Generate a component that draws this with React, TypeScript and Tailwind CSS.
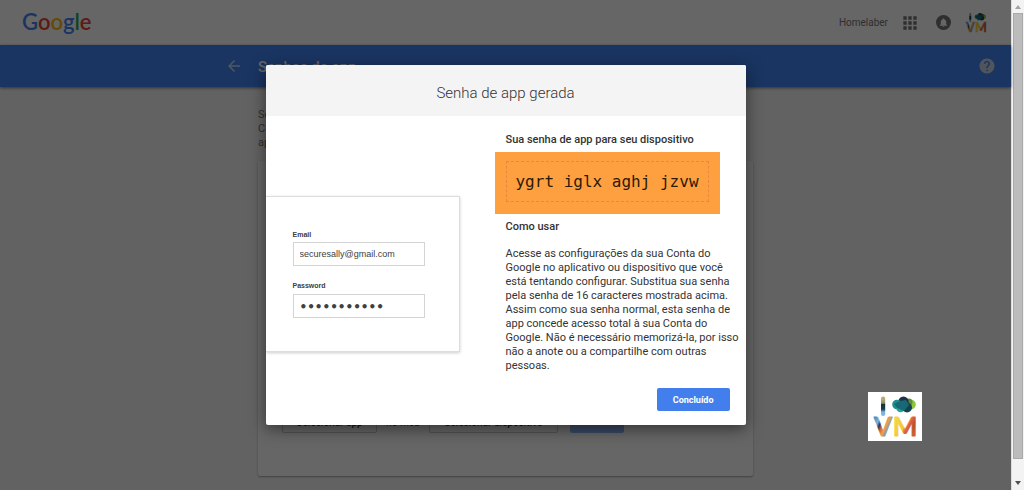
import React from "react";
import { MdArrowBack, MdHelp, MdApps, MdNotifications } from "react-icons/md";

function GoogleLogo() {
  return (
    <a
      href="#google"
      aria-label="Google"
      className="pb-[2px] font-[Lato,sans-serif] text-[22px] leading-7 font-semibold"
    >
      <span className="text-[#4285f4]">G</span>
      <span className="text-[#ea4335]">o</span>
      <span className="text-[#fbbc05]">o</span>
      <span className="text-[#4285f4]">g</span>
      <span className="text-[#34a853]">l</span>
      <span className="text-[#ea4335]">e</span>
    </a>
  );
}

function VmLogo({ id, className }: { id: string; className: string }) {
  const v = `${id}-v`;
  const m = `${id}-m`;
  const i = `${id}-i`;
  return (
    <svg viewBox="0 0 54 49" className={className} aria-hidden="true">
      <defs>
        <linearGradient id={i} x1="0" y1="0" x2="0" y2="1">
          <stop offset="0.15" stopColor="#b9a777" />
          <stop offset="0.35" stopColor="#8a8a5c" />
          <stop offset="0.4" stopColor="#17323c" />
          <stop offset="0.65" stopColor="#1c3b50" />
          <stop offset="0.8" stopColor="#7db7e0" />
        </linearGradient>
        <linearGradient id={v} x1="0" y1="0.2" x2="0.8" y2="0.8">
          <stop offset="0.05" stopColor="#3b86bd" />
          <stop offset="0.3" stopColor="#7fb2d8" />
          <stop offset="0.42" stopColor="#27394a" />
          <stop offset="0.55" stopColor="#d9673c" />
          <stop offset="0.7" stopColor="#e9a254" />
          <stop offset="0.9" stopColor="#4a90c0" />
        </linearGradient>
        <linearGradient id={m} x1="0" y1="0.2" x2="1" y2="0.9">
          <stop offset="0.1" stopColor="#f5d54a" />
          <stop offset="0.45" stopColor="#f0c93a" />
          <stop offset="0.55" stopColor="#e5643f" />
          <stop offset="0.7" stopColor="#b8502a" />
          <stop offset="1" stopColor="#ee6a32" />
        </linearGradient>
      </defs>
      <rect x="13" y="4.500" width="4.200" height="19.500" rx="2.100" fill={`url(#${i})`} />
      <circle cx="43" cy="12.500" r="4.800" fill="#8cc63f" />
      <circle cx="41" cy="10" r="3.500" fill="#5c8f3a" />
      <circle cx="35.500" cy="9.800" r="5.200" fill="#23304a" />
      <circle cx="29" cy="12.500" r="4.800" fill="#1f8f8d" />
      <circle cx="32.500" cy="16" r="4.300" fill="#27a29b" />
      <circle cx="39" cy="15.500" r="5" fill="#14414f" />
      <path d="M26 12 L32 9 L38 8 L41 13 L36 19 L29 16 Z" fill="#176a75" />
      <text
        x="15"
        y="44"
        textAnchor="middle"
        fontFamily="Lato, sans-serif"
        fontSize="26"
        fontWeight="700"
        fill={`url(#${v})`}
        stroke={`url(#${v})`}
        strokeWidth="0.8"
        strokeLinejoin="round"
      >
        V
      </text>
      <text
        x="37"
        y="44"
        textAnchor="middle"
        fontFamily="Lato, sans-serif"
        fontSize="26"
        fontWeight="700"
        fill={`url(#${m})`}
        stroke={`url(#${m})`}
        strokeWidth="0.8"
        strokeLinejoin="round"
      >
        M
      </text>
    </svg>
  );
}

function TopBar() {
  return (
    <header className="flex h-[45px] shrink-0 items-center justify-between bg-white pr-[22px] pl-[22px]">
      <GoogleLogo />
      <div className="flex items-center">
        <a href="#account" className="text-[10px] leading-4 text-[#757575]">
          Homelaber
        </a>
        <button type="button" aria-label="Apps" className="ml-3 text-[#757575]">
          <MdApps size={20} />
        </button>
        <button
          type="button"
          aria-label="Notificações"
          className="ml-4 flex size-[15px] items-center justify-center rounded-full bg-[#757575] text-white"
        >
          <MdNotifications size={11} />
        </button>
        <button type="button" aria-label="Conta" className="ml-3">
          <VmLogo id="avatar" className="h-[25px] w-[26px]" />
        </button>
      </div>
    </header>
  );
}

function TitleBar() {
  return (
    <div className="relative flex h-[42px] shrink-0 items-center bg-[#4285f4] pr-[15px] pl-[225px] text-white shadow-[0_1px_3px_rgba(0,0,0,0.5)]">
      <button type="button" aria-label="Voltar" className="text-[#c3d8fb]">
        <MdArrowBack size={18} />
      </button>
      <h1 className="ml-[15px] flex-1 pt-[2px] text-[15px] leading-5 font-medium">Senhas de app</h1>
      <button type="button" aria-label="Ajuda" className="text-[#c8d4e6]">
        <MdHelp size={18} />
      </button>
    </div>
  );
}

function PasswordPage() {
  return (
    <main className="flex flex-1 flex-col items-center bg-[#f5f5f5] pt-[21px]">
      <div className="w-[495px]">
        <p className="text-[11px] leading-[14px] text-[#757575]">
          Senhas de app permitem que você faça login na sua
          <br />
          Conta do Google em aplicativos de dispositivos sem
          <br />
          aplicar a verificação em duas etapas.
        </p>
        <section className="mt-[11px] flex h-[315px] flex-col justify-end rounded-[2px] bg-white px-6 pb-[43px] shadow-[0_1px_2px_rgba(0,0,0,0.35)]">
          <div className="flex items-center text-[11px] leading-4 text-[#333333]">
            <button
              type="button"
              className="h-6 w-[95px] rounded-[2px] border border-[#cccccc] pt-[3px] text-[10px] font-medium"
            >
              Selecionar app
            </button>
            <span className="w-[52px] pt-[3px] text-center text-[10px]">no meu</span>
            <button
              type="button"
              className="h-6 w-[129px] rounded-[2px] border border-[#cccccc] pt-[3px] text-[10px] font-medium"
            >
              Selecionar dispositivo
            </button>
            <button
              type="button"
              className="ml-3 h-6 w-[54px] rounded-[2px] bg-[#8fb5f5] text-[10px] font-medium text-white"
            >
              Gerar
            </button>
          </div>
        </section>
      </div>
    </main>
  );
}

function SignInExample() {
  return (
    <div className="flex h-[156px] w-[194px] flex-col border border-l-0 border-[#dddddd] bg-white pt-[34px] pl-[27px] font-['Liberation_Sans',Arial,sans-serif] text-[#404040] shadow-[0_1px_3px_rgba(0,0,0,0.2)]">
      <label htmlFor="email" className="text-[7px] leading-[8px] font-bold">
        Email
      </label>
      <input
        id="email"
        type="text"
        readOnly
        defaultValue="securesally@gmail.com"
        className="mt-[3px] h-6 w-[132px] border border-[#d4d4d4] px-[6px] text-[9px]"
      />
      <label htmlFor="password" className="mt-4 text-[7px] leading-[8px] font-bold">
        Password
      </label>
      <input
        id="password"
        type="password"
        readOnly
        defaultValue="securesally"
        className="mt-1 h-6 w-[132px] border border-[#d4d4d4] px-[6px] pt-[2px] font-['DejaVu_Sans',sans-serif] text-[12px] font-bold"
      />
    </div>
  );
}

function PasswordDialog() {
  return (
    <div
      role="dialog"
      aria-labelledby="dialog-title"
      className="w-[480px] overflow-hidden rounded-[2px] bg-white text-[#333333] shadow-[0_4px_16px_rgba(0,0,0,0.5)]"
    >
      <h2
        id="dialog-title"
        className="bg-[#f4f4f4] pt-[18px] pb-[13px] text-center text-[15px] leading-5 font-light text-[#333333]"
      >
        Senha de app gerada
      </h2>
      <div className="flex">
        <div className="w-[229px] pt-20">
          <SignInExample />
        </div>
        <div className="flex flex-1 flex-col pt-[17px] pr-4 pb-[14px] text-[11px] leading-[14px]">
          <h3 className="pl-[11px] font-medium">Sua senha de app para seu dispositivo</h3>
          <div className="mt-[5px] w-[225px] bg-[#ffa040] px-[11px] pt-[9px] pb-3">
            <div className="border border-dashed border-[#e58a3c] py-[9px] text-center font-['DejaVu_Sans_Mono',monospace] text-[16px] leading-[21px] text-[#2b1a08]">
              ygrt iglx aghj jzvw
            </div>
          </div>
          <h3 className="mt-[6px] pl-[11px] font-medium">Como usar</h3>
          <p className="mt-[13px] -mr-3 pl-[11px]">
            Acesse as configurações da sua Conta do
            <br />
            Google no aplicativo ou dispositivo que você está tentando configurar. Substitua sua
            senha pela senha de 16 caracteres mostrada acima. Assim como sua senha normal, esta
            senha de app concede acesso total à sua Conta do
            <br />
            Google. Não é necessário memorizá-la, por isso não a anote ou a compartilhe com outras
            <br />
            pessoas.
          </p>
          <button
            type="button"
            className="mt-[15px] h-[23px] self-end rounded-[2px] bg-[#427fed] px-4 text-[9px] font-bold text-white"
          >
            Concluído
          </button>
        </div>
      </div>
    </div>
  );
}

function ScrollBar() {
  return (
    <div
      aria-hidden="true"
      className="flex w-[13px] shrink-0 flex-col items-center border-l border-[#dcdcdc] bg-[#f3f3f3] py-[5px]"
    >
      <svg viewBox="0 0 6 4" className="h-1 w-[6px]">
        <path d="M0 4 L3 0 L6 4 Z" fill="#a3a3a3" />
      </svg>
      <div className="mt-1 mb-[22px] w-[10px] flex-1 border border-[#a9a9a9] bg-[#bcbcbc]" />
      <svg viewBox="0 0 6 4" className="h-1 w-[6px]">
        <path d="M0 0 L3 4 L6 0 Z" fill="#505050" />
      </svg>
    </div>
  );
}

export default function App() {
  return (
    <div className="flex h-screen overflow-hidden font-[Roboto,sans-serif]">
      <div className="relative flex min-w-0 flex-1 flex-col">
        <TopBar />
        <TitleBar />
        <PasswordPage />
        <div className="absolute inset-0 flex items-center justify-center bg-black/60">
          <PasswordDialog />
        </div>
        <div className="absolute right-[89px] bottom-[49px] bg-white">
          <VmLogo id="mark" className="h-[49px] w-[54px]" />
        </div>
      </div>
      <ScrollBar />
    </div>
  );
}
